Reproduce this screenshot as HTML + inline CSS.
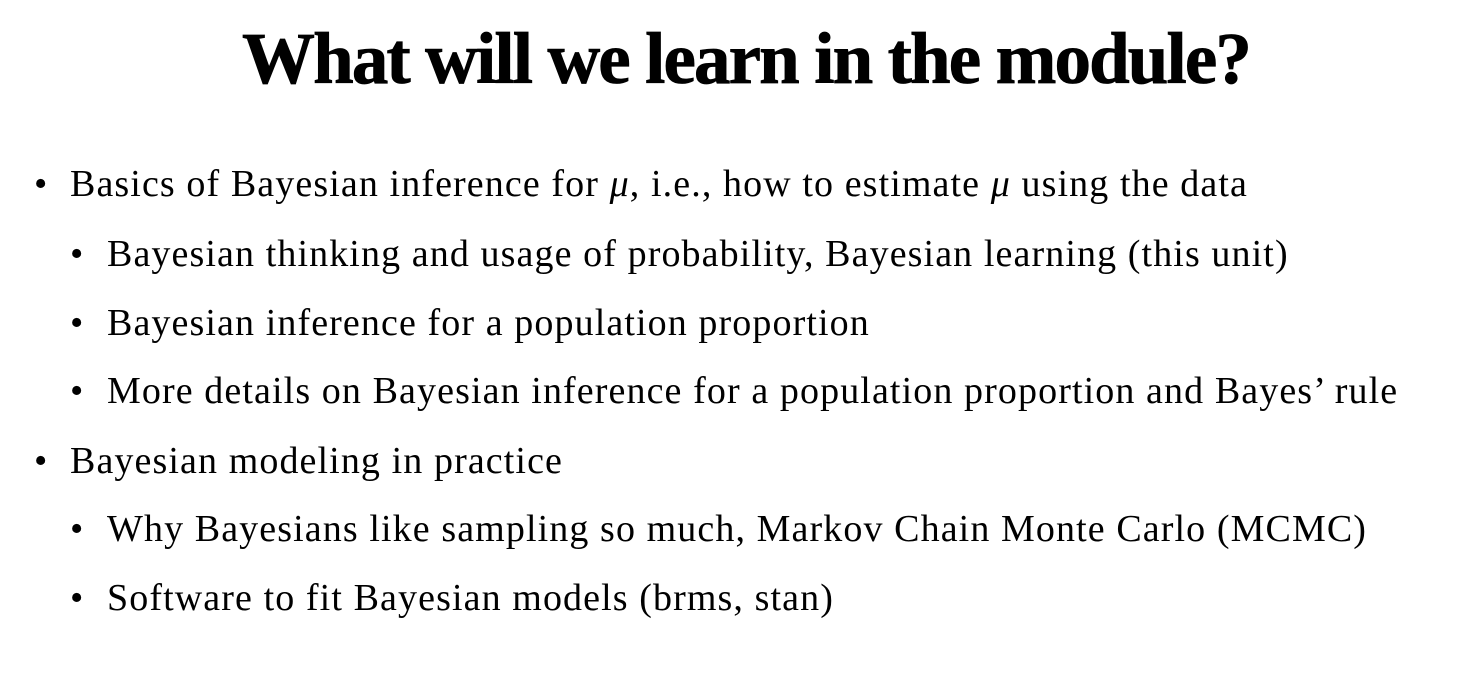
<!DOCTYPE html>
<html><head><meta charset="utf-8"><style>
html,body{margin:0;padding:0;background:#fff;}
body{width:1468px;height:684px;position:relative;overflow:hidden;color:#000;font-family:"Liberation Serif",serif;}
h1{position:absolute;left:12px;width:1468px;top:14px;margin:0;text-align:center;font-size:73px;font-weight:900;letter-spacing:-1.9px;line-height:90px;-webkit-text-stroke:0.8px #000;}
.l{position:absolute;font-size:38px;line-height:40px;white-space:nowrap;letter-spacing:1.1px;}
i{font-style:italic;}
</style></head><body>
<h1>What will we learn in the module?</h1>
<div class="l" style="left:34px;top:164px">•</div>
<div class="l" style="left:70px;top:164px">Basics of Bayesian inference for <i>μ</i>, i.e., how to estimate <i>μ</i> using the data</div>
<div class="l" style="left:70px;top:234px">•</div>
<div class="l" style="left:107px;top:234px">Bayesian thinking and usage of probability, Bayesian learning (this unit)</div>
<div class="l" style="left:70px;top:303px">•</div>
<div class="l" style="left:107px;top:303px">Bayesian inference for a population proportion</div>
<div class="l" style="left:70px;top:371px">•</div>
<div class="l" style="left:107px;top:371px">More details on Bayesian inference for a population proportion and Bayes’ rule</div>
<div class="l" style="left:34px;top:441px">•</div>
<div class="l" style="left:70px;top:441px">Bayesian modeling in practice</div>
<div class="l" style="left:70px;top:509px">•</div>
<div class="l" style="left:107px;top:509px">Why Bayesians like sampling so much, Markov Chain Monte Carlo (MCMC)</div>
<div class="l" style="left:70px;top:578px">•</div>
<div class="l" style="left:107px;top:578px">Software to fit Bayesian models (brms, stan)</div>
</body></html>
